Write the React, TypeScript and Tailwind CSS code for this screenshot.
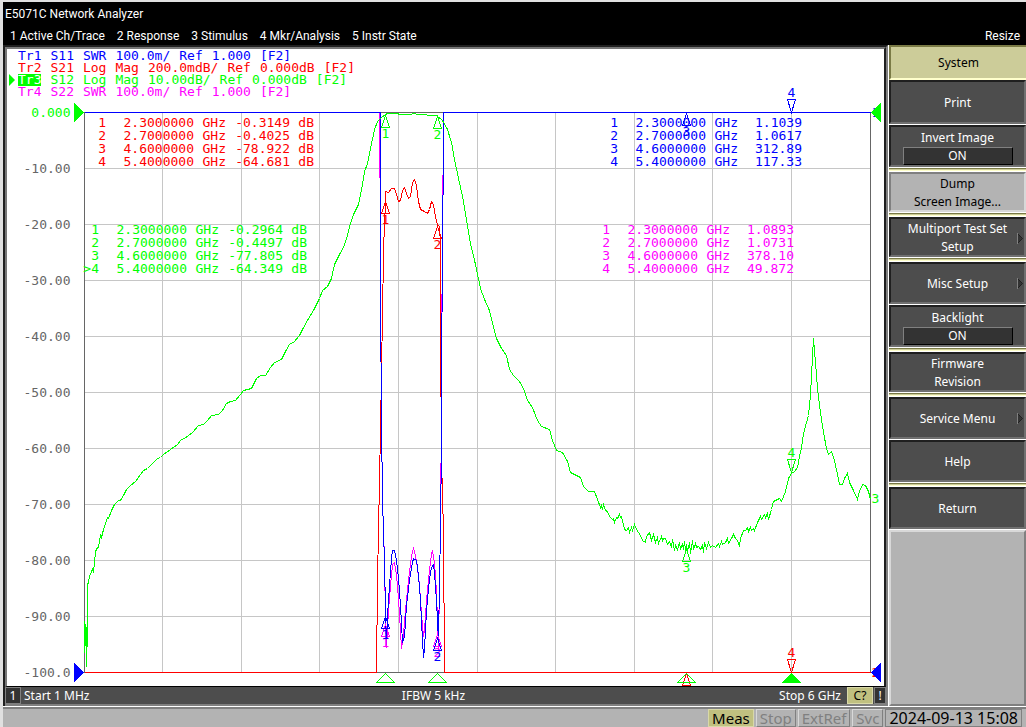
import clsx from "clsx"

type Row = [marker: string, freq: string, value: string]

interface SoftKey {
  label: string[]
  value?: string
  submenu?: boolean
  active?: boolean
  group?: boolean
  height: string
}

const MENUS = [
  "1 Active Ch/Trace",
  "2 Response",
  "3 Stimulus",
  "4 Mkr/Analysis",
  "5 Instr State",
]

const TRACES = [
  { words: ["Tr1", "S11", "SWR", "100.0m/", "Ref", "1.000", "[F2]"], color: "text-[#0000ff]" },
  { words: ["Tr2", "S21", "Log", "Mag", "200.0mdB/", "Ref", "0.000dB", "[F2]"], color: "text-[#ff0000]" },
  { words: ["Tr3", "S12", "Log", "Mag", "10.00dB/", "Ref", "0.000dB", "[F2]"], color: "text-[#00ff00]", active: true },
  { words: ["Tr4", "S22", "SWR", "100.0m/", "Ref", "1.000", "[F2]"], color: "text-[#ff00ff]" },
]

const S21_ROWS: Row[] = [
  ["1", "2.3000000", "-0.3149"],
  ["2", "2.7000000", "-0.4025"],
  ["3", "4.6000000", "-78.922"],
  ["4", "5.4000000", "-64.681"],
]

const S12_ROWS: Row[] = [
  ["1", "2.3000000", "-0.2964"],
  ["2", "2.7000000", "-0.4497"],
  ["3", "4.6000000", "-77.805"],
  [">4", "5.4000000", "-64.349"],
]

const S11_ROWS: Row[] = [
  ["1", "2.3000000", "1.1039"],
  ["2", "2.7000000", "1.0617"],
  ["3", "4.6000000", "312.89"],
  ["4", "5.4000000", "117.33"],
]

const S22_ROWS: Row[] = [
  ["1", "2.3000000", "1.0893"],
  ["2", "2.7000000", "1.0731"],
  ["3", "4.6000000", "378.10"],
  ["4", "5.4000000", "49.872"],
]

// group: a khaki divider follows the key
const SOFT_KEYS: SoftKey[] = [
  { label: ["Print"], height: "h-11" },
  { label: ["Invert Image"], value: "ON", group: true, height: "h-[42px]" },
  { label: ["Dump", "Screen Image..."], active: true, group: true, height: "h-10" },
  { label: ["Multiport Test Set", "Setup"], submenu: true, group: true, height: "h-10" },
  { label: ["Misc Setup"], submenu: true, height: "h-[42px]" },
  { label: ["Backlight"], value: "ON", group: true, height: "h-[42px]" },
  { label: ["Firmware", "Revision"], group: true, height: "h-10" },
  { label: ["Service Menu"], submenu: true, height: "h-[42px]" },
  { label: ["Help"], group: true, height: "h-[42px]" },
  { label: ["Return"], height: "h-[42px]" },
]

const GRID_X = [162, 241, 319, 398, 477, 555, 634, 712, 791]
const GRID_Y = [168, 224, 280, 336, 392, 448, 504, 560, 616]
const SCALE = ["0.000", "-10.00", "-20.00", "-30.00", "-40.00", "-50.00", "-60.00", "-70.00", "-80.00", "-90.00", "-100.0"]

const S12_PATH =
  "84,620 84,652 85,624 85,645 86,627 86,666 87,627 87,585 88,581 89,576 91,571 92,569 93,571 94,562 95,552 96,548 98,547 99,540 100,535 101,537 103,529 105,523 107,517 108,518 111,510 114,504 118,500 120,500 123,495 126,489 130,485 135,481 140,474 143,470 147,468 152,463 157,458 160,457 163,454 170,449 177,444 180,440 187,436 193,431 198,425 203,424 207,420 211,415 218,414 222,410 226,403 230,401 235,400 240,394 243,390 251,388 256,378 260,375 265,375 270,367 274,362 281,359 285,351 289,344 294,341 299,335 302,329 308,318 313,310 319,298 322,290 327,286 331,278 334,264 339,254 343,247 346,238 350,223 353,214 358,204 362,184 364,171 367,163 370,148 374,129 377,121 381,117 385,114 387,113 397,113 399,114 411,114 412,113 415,113 416,114 436,115 442,120 447,129 451,142 454,159 458,178 462,196 466,219 470,243 475,264 480,288 484,299 489,310 492,323 496,338 501,348 506,355 509,369 513,375 519,381 523,388 527,400 532,407 537,420 541,426 549,429 552,440 556,450 562,452 567,461 570,472 574,474 580,477 583,486 588,491 594,491 597,499 600,507 601,505 602,509 603,504 605,510 607,511 609,516 612,519 613,518 614,522 616,517 617,518 619,514 620,517 621,516 624,529 626,530 628,527 629,532 631,527 632,530 634,524 636,529 638,532 640,535 642,540 645,542 646,536 649,532 651,540 653,534 655,542 657,537 658,543 661,536 662,540 663,538 665,538 667,544 669,541 671,547 672,539 674,550 675,545 677,549 679,542 680,549 682,543 683,549 684,541 685,550 686,544 687,551 689,542 690,553 692,540 693,549 695,543 696,547 698,546 700,549 702,545 703,552 704,542 706,548 708,542 710,547 712,545 715,547 718,543 719,546 721,541 722,544 725,542 727,538 728,543 731,538 733,534 735,538 737,540 739,546 740,538 743,530 745,530 747,527 748,531 750,527 751,530 753,528 754,530 757,522 760,516 761,519 764,514 765,517 767,513 768,519 771,509 773,501 777,499 779,498 781,501 785,491 788,478 791,473 794,471 797,467 799,456 801,447 803,433 808,415 810,395 811,375 813,338 815,362 817,388 820,412 823,432 826,448 828,454 831,451 834,460 837,474 839,484 842,484 844,478 847,473 849,482 853,490 857,499 859,491 862,484 865,485 868,491 870,499"

const S11_PATH =
  "84,112 380,112 380,300 381,420 382,500 383,530 384,562 385,610 386,644 387,615 389,585 391,558 392,550 394,550 396,560 398,578 400,605 402,642 404,636 406,605 409,580 412,562 413,558 416,560 418,575 420,600 422,640 423,657 424,648 426,610 429,578 431,567 433,564 434,573 436,600 438,640 439,580 440,530 441,440 442,195 443,194 443,112 870,112"

const S22_PATH =
  "84,112 379,112 379,176 380,178 380,300 381,420 382,500 384,560 385,620 386,647 388,610 390,585 392,564 394,562 396,575 398,598 400,630 401,648 403,634 405,610 408,580 411,556 413,547 415,555 417,568 419,585 421,614 423,636 424,630 426,600 429,570 431,553 432,550 434,562 436,592 438,650 439,580 440,530 441,400 442,195 442,176 443,174 443,112 870,112"

const S21_PATH =
  "84,672 376,672 377,580 378,530 380,430 383,255 384,220 385,205 385,191 388,192 391,188 394,188 396,194 398,201 400,200 402,190 404,187 406,193 408,198 410,196 412,182 414,179 416,185 418,201 420,209 424,211 427,213 429,209 431,201 433,204 435,217 437,224 439,226 440,245 440,330 441,460 443,530 444,672 870,672"

interface MarkerProps {
  x: number
  y: number
  label: string
  color: string
  down?: boolean
}

function Marker({ x, y, label, color, down = false }: MarkerProps) {
  const base = down ? y - 13 : y + 12
  return (
    <g className={color}>
      <polygon
        points={`${x},${y} ${x - 4},${base} ${x + 4},${base}`}
        fill="none"
        stroke="currentColor"
      />
      <text x={x} y={down ? base - 3 : base + 10} textAnchor="middle" fill="currentColor">
        {label}
      </text>
    </g>
  )
}

function Plot() {
  return (
    <svg
      viewBox="7 49 877 637"
      className="block h-auto w-full font-['DejaVu_Sans_Mono',monospace] text-[13px]"
      shapeRendering="crispEdges"
      role="img"
      aria-label="S-parameter traces"
    >
      <g transform="translate(0.5 0.5)">
        <g stroke="#c6c6c6">
          {GRID_X.map((x) => (
            <line key={x} x1={x} x2={x} y1={112} y2={672} />
          ))}
          {GRID_Y.map((y) => (
            <line key={y} x1={84} x2={870} y1={y} y2={y} />
          ))}
        </g>
        <rect x={84} y={112} width={786} height={560} fill="none" stroke="#666666" />
        {SCALE.map((label, i) => (
          <text
            key={label}
            x={70}
            y={116 + i * 56}
            textAnchor="end"
            fill={i === 0 ? "#00ff00" : "#666666"}
          >
            {label}
          </text>
        ))}

        <g fill="none">
          <polyline points={S22_PATH} stroke="#ff00ff" />
          <polyline points={S21_PATH} stroke="#ff0000" />
          <polyline points={S11_PATH} stroke="#0000ff" />
          <polyline points={S12_PATH} stroke="#00ff00" />
          <path d="M381 112H442M378 672H443" stroke="#666666" />
        </g>

        <Marker x={385} y={624} label="1" color="text-[#ff00ff]" />
        <Marker x={437} y={634} label="2" color="text-[#ff00ff]" />
        <Marker x={385} y={201} label="1" color="text-[#ff0000]" />
        <Marker x={437} y={226} label="2" color="text-[#ff0000]" />
        <Marker x={686} y={673} label="3" color="text-[#ff0000]" />
        <Marker x={791} y={672} label="4" color="text-[#ff0000]" down />
        <Marker x={385} y={616} label="1" color="text-[#0000ff]" />
        <Marker x={437} y={638} label="2" color="text-[#0000ff]" />
        <Marker x={686} y={113} label="3" color="text-[#0000ff]" />
        <Marker x={791} y={112} label="4" color="text-[#0000ff]" down />
        <Marker x={385} y={115} label="1" color="text-[#00ff00]" />
        <Marker x={437} y={116} label="2" color="text-[#00ff00]" />
        <Marker x={686} y={549} label="3" color="text-[#00ff00]" />
        <Marker x={791} y={472} label="4" color="text-[#00ff00]" down />

        <g fill="none" stroke="#00ff00">
          <path d="M385 673l9 9h-18z" />
          <path d="M437 673l9 9h-18z" />
          <path d="M686 673l9 9h-18z" />
          <path d="M791 673l9 9h-18z" fill="#00ff00" />
        </g>

        <text x={871} y={116} fill="#0000ff">1</text>
        <text x={871} y={676} fill="#ff0000">2</text>
        <text x={871} y={502} fill="#00ff00">3</text>
        <path d="M74 103v18l9 -9z" fill="#00ff00" stroke="#00ff00" />
        <path d="M880 103v18l-9 -9z" fill="#00ff00" stroke="#00ff00" />
        <path d="M74 663v18l9 -9z" fill="#0000ff" stroke="#0000ff" />
        <path d="M880 663v18l-9 -9z" fill="#0000ff" stroke="#0000ff" />
      </g>
    </svg>
  )
}

interface MarkerTableProps {
  rows: Row[]
  unit?: string
  className: string
}

function MarkerTable({ rows, unit, className }: MarkerTableProps) {
  return (
    <table className={clsx("absolute table-fixed text-[13px] leading-[13px]", className)}>
      <tbody>
        {rows.map(([marker, freq, value]) => (
          <tr key={marker}>
            <td className="w-4 p-0 text-right">{marker}</td>
            <td className="w-22 p-0 text-right">{freq}</td>
            <td className="w-8 p-0 text-right">GHz</td>
            <td className="w-16 p-0 text-right">{value}</td>
            {unit && <td className="w-6 p-0 text-right">{unit}</td>}
          </tr>
        ))}
      </tbody>
    </table>
  )
}

function TraceList() {
  return (
    <ul className="absolute top-px left-[2px] text-[13px] leading-[12px]">
      {TRACES.map((trace) => (
        <li key={trace.words[0]} className={clsx("flex items-center", trace.color)}>
          <svg viewBox="0 0 7 12" className="mr-[2px] h-3 w-[7px]" aria-hidden="true">
            {trace.active && <path d="M0 0v12l6-6z" fill="currentColor" />}
          </svg>
          <span className="flex gap-[9px]">
            {trace.words.map((word, i) => (
              <span key={i} className={clsx(trace.active && i === 0 && "bg-[#00ff00] text-white")}>
                {word}
              </span>
            ))}
          </span>
        </li>
      ))}
    </ul>
  )
}

function SoftKeyButton({ item }: { item: SoftKey }) {
  return (
    <li className="border-b border-white">
      <button
        type="button"
        className={clsx(
          "relative flex w-full flex-col items-center justify-center border-2 pt-[2px] text-[12px] leading-[18px]",
          item.height,
          item.active
            ? "border-t-[#808080] border-r-[#d8d8d8] border-b-[#d8d8d8] border-l-[#808080] bg-[#b3b3b3] text-black"
            : "border-t-[#1f1f1f] border-r-[#707070] border-b-[#707070] border-l-[#1f1f1f] bg-[#4d4d4d] text-white",
        )}
      >
        {item.label.map((line) => (
          <span key={line}>{line}</span>
        ))}
        {item.value && (
          <span className="w-[110px] border border-t-[#808080] border-r-black border-b-black border-l-[#808080] bg-[#333333] leading-4">
            {item.value}
          </span>
        )}
        {item.submenu && (
          <svg viewBox="0 0 6 11" className="absolute top-3.5 right-px h-[11px] w-1.5" aria-hidden="true">
            <path d="M0.5 0.5v10l5-5z" fill="#333333" stroke="#1f1f1f" />
            <path d="M0.5 0v11" stroke="#808080" />
          </svg>
        )}
      </button>
      {item.group && (
        <div className="border-t border-white">
          <div className="h-[3px] border-t border-b border-t-[#7a7a45] border-b-[#ffffcc] bg-[#cccc99]" />
        </div>
      )}
    </li>
  )
}

function StatusItem({ label, on = false }: { label: string; on?: boolean }) {
  return (
    <span
      className={clsx(
        "border px-[3px] text-[15px] leading-4",
        on
          ? "border-[#d8d8a8] bg-[#c0c080] text-black"
          : "border-t-[#d8d8d8] border-r-[#808080] border-b-[#808080] border-l-[#d8d8d8] bg-[#b3b3b3] text-[#808080]",
      )}
    >
      {label}
    </span>
  )
}

export default function App() {
  return (
    <div className="flex min-h-screen flex-col bg-[#e0e0e0] pt-[2px] pl-[3px] font-['Noto_Sans',sans-serif]">
      <header className="bg-black font-[Roboto,sans-serif] text-[12px] text-white">
        <h1 className="px-[2px] leading-6">E5071C Network Analyzer</h1>
        <nav className="flex h-[19px] items-center justify-between pr-1.5 pl-[7px]">
          <div className="flex gap-3">
            {MENUS.map((menu) => (
              <button key={menu} type="button">
                {menu}
              </button>
            ))}
          </div>
          <button type="button">Resize</button>
        </nav>
      </header>

      <div className="flex flex-1">
        <main className="flex min-w-0 flex-1 flex-col border-t-2 border-r-2 border-l-2 border-[#202020] border-r-[#808080]">
          <div className="border-t-2 border-r-2 border-b border-l-2 border-t-[#777777] border-r-[#202020] border-b-black border-l-[#777777] bg-white">
            <div className="relative font-['DejaVu_Sans_Mono',monospace]">
              <Plot />
              <TraceList />
              <MarkerTable rows={S21_ROWS} unit="dB" className="top-[67px] left-[83px] text-[#ff0000]" />
              <MarkerTable rows={S12_ROWS} unit="dB" className="top-[174px] left-[76px] text-[#00ff00]" />
              <MarkerTable rows={S11_ROWS} className="top-[67px] left-[595px] text-[#0000ff]" />
              <MarkerTable rows={S22_ROWS} className="top-[174px] left-[587px] text-[#ff00ff]" />
            </div>
          </div>
          <div className="flex flex-1 items-center border-b-2 border-[#808080] bg-[#4d4d4d] text-[12px] leading-4 text-white">
            <div className="flex flex-1 items-center gap-[3px]">
              <span className="w-4 border border-[#808080] bg-[#333333] text-center leading-[15px]">1</span>
              <span>Start 1 MHz</span>
            </div>
            <span className="pr-6">IFBW 5 kHz</span>
            <div className="flex flex-1 items-center justify-end">
              <span className="mr-1.5">Stop 6 GHz</span>
              <span className="w-6.5 border border-[#d8d8a8] bg-[#c0c080] text-center leading-[15px] text-black">C?</span>
              <span className="ml-px w-3 border border-[#808080] bg-[#333333] text-center leading-[15px]">!</span>
            </div>
          </div>
        </main>

        <aside className="flex w-[138px] flex-col border-l border-white">
          <h2 className="h-[35px] border-t-2 border-b-2 border-l-2 border-t-[#7a7a45] border-b-[#ffffcc] border-l-[#7a7a45] bg-[#cccc99] text-center text-[12px] leading-8 text-black">
            System
          </h2>
          <ul>
            {SOFT_KEYS.map((item) => (
              <SoftKeyButton key={item.label[0]} item={item} />
            ))}
          </ul>
          <div className="flex-1 border-2 border-t-[#d8d8d8] border-r-[#808080] border-b-[#808080] border-l-[#d8d8d8] bg-[#b3b3b3]" />
        </aside>
      </div>

      <footer className="flex h-[21px] justify-end border-t border-white bg-[#b3b3b3] pt-[2px] pr-1 shadow-[inset_0_2px_0_#808080]">
        <div className="flex gap-[2px]">
          <StatusItem label="Meas" on />
          <StatusItem label="Stop" />
          <StatusItem label="ExtRef" />
          <StatusItem label="Svc" />
          <time
            dateTime="2024-09-13T15:08"
            className="border border-[#808080] px-[3px] text-[16px] leading-4 text-black"
          >
            2024-09-13 15:08
          </time>
        </div>
      </footer>
    </div>
  )
}
